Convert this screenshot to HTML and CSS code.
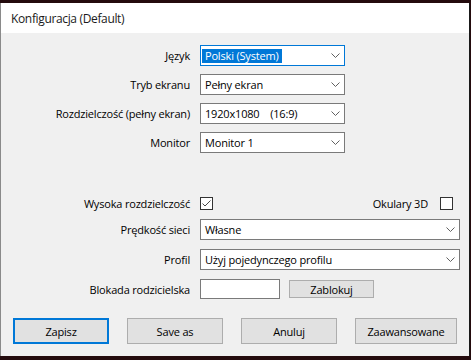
FILE: index.html
```html
<html>

<head>
    <title>Konfiguracja</title>

    <link rel="stylesheet" href="styles.css">
</head>

<body>
    <div class="window">
        <div class="titlebar">Konfiguracja (Default)</div>

        <div class="content">
            <!-- Display settings -->
            <div class="form form-top">
                <label class="label">Język</label>
                <div class="combo focused">
                    <span class="value selected">Polski (System)</span>
                    <svg class="chevron" width="9" height="5" viewBox="0 0 9 5"><polyline points="0.5,0.5 4.5,4.5 8.5,0.5" fill="none" stroke="#606060" stroke-width="1"/></svg>
                </div>

                <label class="label">Tryb ekranu</label>
                <div class="combo">
                    <span class="value">Pełny ekran</span>
                    <svg class="chevron" width="9" height="5" viewBox="0 0 9 5"><polyline points="0.5,0.5 4.5,4.5 8.5,0.5" fill="none" stroke="#606060" stroke-width="1"/></svg>
                </div>

                <label class="label">Rozdzielczość (pełny ekran)</label>
                <div class="combo">
                    <span class="value">1920x1080&nbsp;&nbsp;&nbsp;&nbsp;(16:9)</span>
                    <svg class="chevron" width="9" height="5" viewBox="0 0 9 5"><polyline points="0.5,0.5 4.5,4.5 8.5,0.5" fill="none" stroke="#606060" stroke-width="1"/></svg>
                </div>

                <label class="label">Monitor</label>
                <div class="combo">
                    <span class="value">Monitor 1</span>
                    <svg class="chevron" width="9" height="5" viewBox="0 0 9 5"><polyline points="0.5,0.5 4.5,4.5 8.5,0.5" fill="none" stroke="#606060" stroke-width="1"/></svg>
                </div>
            </div>

            <!-- Other settings -->
            <div class="form form-bottom">
                <label class="label">Wysoka rozdzielczość</label>
                <div class="check-row">
                    <span class="checkbox checked">
                        <svg width="11" height="11" viewBox="0 0 11 11"><polyline points="1.5,5.5 4,8 9.5,2.5" fill="none" stroke="#4a4a4a" stroke-width="1"/></svg>
                    </span>
                    <span class="check-group">
                        <span>Okulary 3D</span>
                        <span class="checkbox"></span>
                    </span>
                </div>

                <label class="label">Prędkość sieci</label>
                <div class="combo wide">
                    <span class="value">Własne</span>
                    <svg class="chevron" width="9" height="5" viewBox="0 0 9 5"><polyline points="0.5,0.5 4.5,4.5 8.5,0.5" fill="none" stroke="#606060" stroke-width="1"/></svg>
                </div>

                <label class="label">Profil</label>
                <div class="combo wide">
                    <span class="value">Użyj pojedynczego profilu</span>
                    <svg class="chevron" width="9" height="5" viewBox="0 0 9 5"><polyline points="0.5,0.5 4.5,4.5 8.5,0.5" fill="none" stroke="#606060" stroke-width="1"/></svg>
                </div>

                <label class="label">Blokada rodzicielska</label>
                <div class="lock-row">
                    <input class="textbox" type="text">
                    <button class="small-button">Zablokuj</button>
                </div>
            </div>

            <div class="buttons">
                <button class="button default">Zapisz</button>
                <button class="button">Save as</button>
                <button class="button">Anuluj</button>
                <button class="button last">Zaawansowane</button>
            </div>
        </div>
    </div>
</body>

</html>
```

FILE: styles.css
```css
body {
    margin: 0;
    background-color: #240b0d;
    font-family: "Open Sans", "Noto Sans", sans-serif;
    font-size: 11px;
    letter-spacing: -0.18px;
    color: #000000;
}

.window {
    margin-top: 3px;
    width: 470px;
    height: 353px;
    box-sizing: border-box;
    border-left: 1px solid #8a8a8a;
    border-right: 1px solid #1a1a1a;
    background-color: #f0f0f0;
}

.titlebar {
    height: 30px;
    background-color: #ffffff;
    display: flex;
    align-items: center;
    padding-left: 10px;
    font-size: 12px;
    letter-spacing: -0.35px;
    color: #1a1a1a;
}

.content {
    display: flex;
    flex-direction: column;
}

.form {
    display: grid;
    grid-template-columns: 189px 259px;
    column-gap: 10px;
    align-items: center;
}

.form-top {
    padding-top: 12px;
    grid-auto-rows: 21px;
    row-gap: 8px;
}

.form-bottom {
    margin-top: 44px;
    grid-template-rows: 13px 21px 21px 20px;
    row-gap: 9px;
}

.label {
    text-align: right;
    white-space: nowrap;
}

.combo {
    width: 145px;
    height: 21px;
    box-sizing: border-box;
    border: 1px solid #7a7a7a;
    background-color: #ffffff;
    display: flex;
    align-items: center;
    justify-content: space-between;
    padding: 0 4px 0 1px;
}

.combo.focused {
    border-color: #0078d7;
}

.combo.wide {
    width: 260px;
}

.value {
    padding: 0 3px;
    line-height: 14px;
    white-space: nowrap;
}

.value.selected {
    background-color: #0078d7;
    color: #ffffff;
}

.chevron {
    display: block;
}

.check-row {
    display: flex;
    align-items: center;
    justify-content: space-between;
    padding-right: 6px;
}

.check-group {
    display: flex;
    align-items: center;
    gap: 12px;
}

.checkbox {
    width: 13px;
    height: 13px;
    box-sizing: border-box;
    border: 1px solid #333333;
    background-color: #ffffff;
    display: flex;
    align-items: center;
    justify-content: center;
}

.lock-row {
    display: flex;
    align-items: center;
    gap: 9px;
}

.textbox {
    width: 80px;
    height: 20px;
    box-sizing: border-box;
    border: 1px solid #7a7a7a;
    background-color: #ffffff;
    margin: 0;
    padding: 0;
}

.small-button {
    width: 85px;
    height: 18px;
    box-sizing: border-box;
    border: 1px solid #adadad;
    background-color: #e1e1e1;
    font-family: inherit;
    font-size: 11px;
    letter-spacing: inherit;
    padding: 0;
    color: #000000;
}

.buttons {
    display: flex;
    gap: 18px;
    margin-top: 19px;
    padding-left: 12px;
}

.button {
    width: 96px;
    height: 26px;
    box-sizing: border-box;
    border: 1px solid #adadad;
    background-color: #e1e1e1;
    font-family: inherit;
    font-size: 11px;
    letter-spacing: inherit;
    padding: 0;
    color: #000000;
}

.button.default {
    border: 2px solid #0078d7;
}

.button.last {
    width: 102px;
}
```
